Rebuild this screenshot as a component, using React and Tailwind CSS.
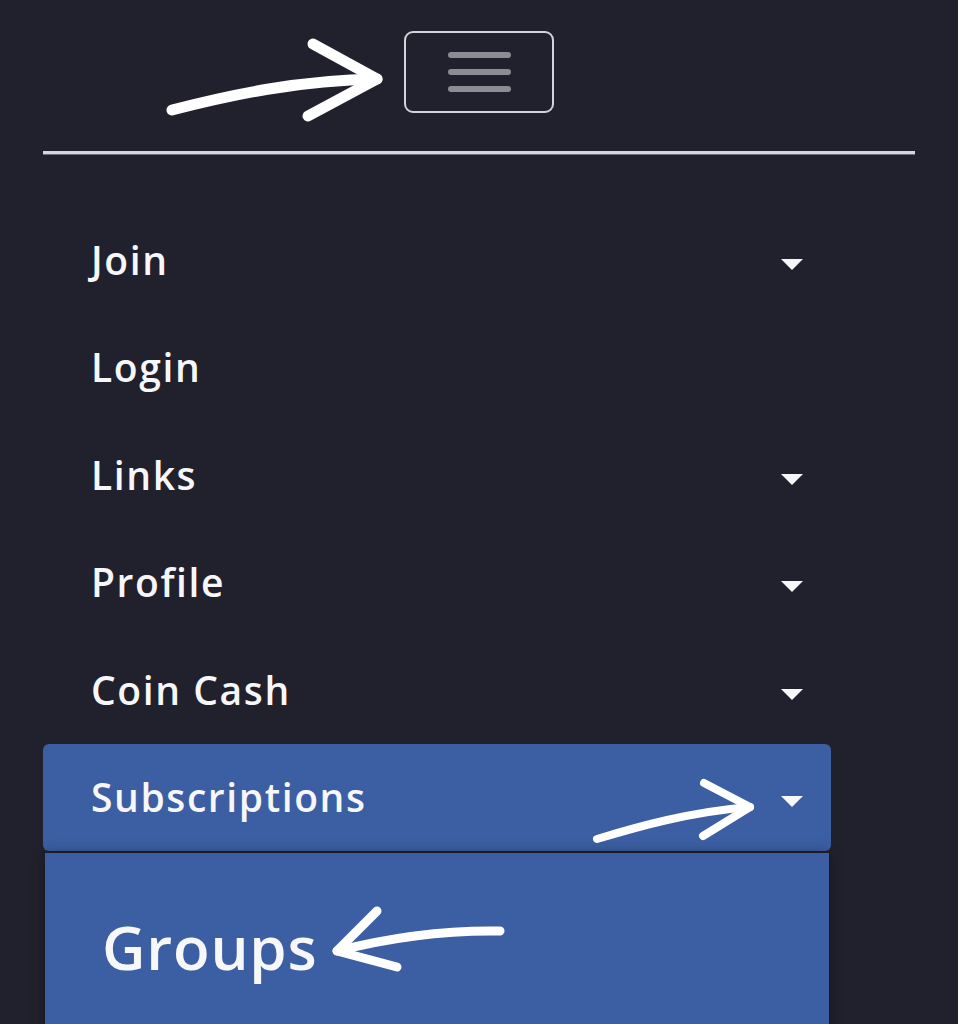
import React from "react";

function Caret() {
  return (
    <svg width="22" height="11" viewBox="0 0 22 11" className="mt-[9px]">
      <polygon points="0,0 22,0 11,11" fill="#f7f7f9" />
    </svg>
  );
}

const items = ["Join", "Login", "Links", "Profile", "Coin Cash"];
const hasCaret = { Join: true, Login: false, Links: true, Profile: true, "Coin Cash": true };

export default function App() {
  return (
    <div
      className="relative min-h-screen h-[1024px] overflow-hidden bg-[#20212d]"
      style={{ fontFamily: '"Open Sans", "Noto Sans", sans-serif' }}
    >
      <header className="flex justify-center pt-[31px]">
        <button className="flex h-[82px] w-[150px] flex-col items-center justify-center gap-[11px] rounded-[9px] border-2 border-[#d2d2da]">
          <span className="block h-[6px] w-[63px] rounded-full bg-[#8c8c92]" />
          <span className="block h-[6px] w-[63px] rounded-full bg-[#8c8c92]" />
          <span className="block h-[6px] w-[63px] rounded-full bg-[#8c8c92]" />
        </button>
      </header>
      <div className="mx-[43px] mt-[38px] h-[3px] bg-[#d6d6de] shadow-[0_1px_0_#6b6d7a]" />
      <nav className="ml-[43px] mt-[52px] w-[788px]">
        {items.map((t) => (
          <div
            key={t}
            className="flex h-[107.5px] items-center justify-between pl-[48px] pr-[28px] text-[39px] font-semibold tracking-[1.6px] text-[#f7f7f9]"
          >
            <span>{t}</span>
            {hasCaret[t] && <Caret />}
          </div>
        ))}
        <div className="flex h-[107px] items-center justify-between rounded-[6px] bg-[#3c5ea3] pl-[48px] pr-[28px] text-[39px] font-semibold tracking-[1.6px] text-[#f7f7f9]">
          <span>Subscriptions</span>
          <Caret />
        </div>
        <div className="mx-[2px] mt-[2px] h-[200px] bg-[#3c5ea3] pl-[57px] pt-[54px] text-[60px] font-semibold leading-[80px] tracking-[0.8px] text-[#f7f7f9] shadow-[0_0_12px_rgba(0,0,0,0.35)]">
          Groups
        </div>
      </nav>

      <svg
        className="pointer-events-none absolute left-0 top-0"
        width="958"
        height="1024"
        viewBox="0 0 958 1024"
        fill="none"
        stroke="#ffffff"
        strokeLinecap="round"
        strokeLinejoin="round"
      >
        <path d="M172 110 C 230 95, 300 80, 377 79" strokeWidth="11" />
        <path d="M313 44 L 377 79 L 308 116" strokeWidth="11" />
        <path d="M597 839 C 640 826, 690 812, 750 807" strokeWidth="8" />
        <path d="M704 783 L 750 807 L 703 836" strokeWidth="8" />
        <path d="M500 931 C 440 930, 380 940, 337 951" strokeWidth="9" />
        <path d="M377 911 L 337 951 L 397 967" strokeWidth="9" />
      </svg>
    </div>
  );
}
